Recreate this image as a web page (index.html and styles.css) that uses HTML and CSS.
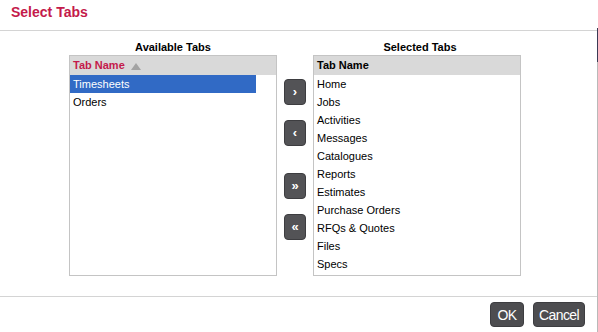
FILE: index.html
```html
<!DOCTYPE html>
<html lang="en">
<head>
    <meta charset="UTF-8">
    <title>Select Tabs</title>
    <link rel="stylesheet" href="styles.css">
</head>
<body>
    <div class="page">
        <div class="dialog">
            <div class="dialog-title">Select Tabs</div>

            <div class="dialog-body">
                <div class="tab-column">
                    <div class="column-label">Available Tabs</div>
                    <div class="list-box">
                        <div class="list-head sorted">
                            Tab Name
                            <svg class="sort-icon" width="10" height="7" viewBox="0 0 10 7"><polygon points="5,0 10,7 0,7" fill="#a3a3a3"/></svg>
                        </div>
                        <div class="list-rows narrow">
                            <div class="list-row selected">Timesheets</div>
                            <div class="list-row">Orders</div>
                        </div>
                    </div>
                </div>

                <div class="move-buttons">
                    <button class="move-btn">&rsaquo;</button>
                    <button class="move-btn">&lsaquo;</button>
                    <button class="move-btn spaced">&raquo;</button>
                    <button class="move-btn">&laquo;</button>
                </div>

                <div class="tab-column">
                    <div class="column-label">Selected Tabs</div>
                    <div class="list-box">
                        <div class="list-head">Tab Name</div>
                        <div class="list-rows">
                            <div class="list-row">Home</div>
                            <div class="list-row">Jobs</div>
                            <div class="list-row">Activities</div>
                            <div class="list-row">Messages</div>
                            <div class="list-row">Catalogues</div>
                            <div class="list-row">Reports</div>
                            <div class="list-row">Estimates</div>
                            <div class="list-row">Purchase Orders</div>
                            <div class="list-row">RFQs &amp; Quotes</div>
                            <div class="list-row">Files</div>
                            <div class="list-row">Specs</div>
                        </div>
                    </div>
                </div>
            </div>

            <div class="dialog-footer">
                <button class="footer-btn">OK</button>
                <button class="footer-btn">Cancel</button>
            </div>
        </div>
        <div class="page-edge"></div>
    </div>
</body>
</html>
```

FILE: styles.css
```css
body {
    margin: 0;
    font-family: "Liberation Sans", Arial, sans-serif;
    font-size: 11px;
    color: #000;
    background: #fff;
}
.page {
    display: flex;
    height: 332px;
}
.dialog {
    flex: 1;
    display: flex;
    flex-direction: column;
}
.page-edge {
    width: 1px;
    margin-top: 28px;
    background: linear-gradient(#3b3b55 0, #3b3b55 34px, #b9b9b9 34px);
}
.dialog-title {
    height: 31px;
    box-sizing: border-box;
    padding: 4px 0 0 11px;
    font-size: 14px;
    font-weight: bold;
    color: #c41a4b;
    border-bottom: 1px solid #d4d4d4;
}
.dialog-body {
    flex: 1;
    display: flex;
    padding: 9px 0 0 69px;
}
.tab-column {
    width: 208px;
}
.column-label {
    height: 15px;
    line-height: 15px;
    text-align: center;
    font-weight: bold;
}
.tab-column + .move-buttons + .tab-column .column-label {
    padding-left: 6px;
}
.list-box {
    height: 221px;
    box-sizing: border-box;
    border: 1px solid #c4c4c4;
}
.list-head {
    height: 19px;
    line-height: 19px;
    padding-left: 3px;
    background: #d9d9d9;
    font-weight: bold;
}
.list-head.sorted {
    color: #c41a4b;
}
.sort-icon {
    margin-left: 3px;
    vertical-align: -1px;
}
.list-rows.narrow {
    width: 186px;
}
.list-row {
    height: 18px;
    line-height: 18px;
    padding-left: 3px;
}
.list-row.selected {
    background: #316ac5;
    color: #fff;
}
.move-buttons {
    width: 36px;
    display: flex;
    flex-direction: column;
    align-items: center;
    gap: 15px;
    padding-top: 39px;
    box-sizing: border-box;
}
.move-btn {
    width: 22px;
    height: 26px;
    padding: 0;
    border: 1px solid #3d3d40;
    border-radius: 4px;
    background: #535356;
    color: #fff;
    font-family: "Liberation Sans", Arial, sans-serif;
    font-size: 13px;
    font-weight: bold;
    line-height: 22px;
}
.move-btn.spaced {
    margin-top: 12px;
}
.dialog-footer {
    height: 36px;
    box-sizing: border-box;
    border-top: 1px solid #d4d4d4;
    display: flex;
    justify-content: flex-end;
    gap: 9px;
    padding: 5px 12px 0 0;
}
.footer-btn {
    height: 25px;
    padding: 0 5px;
    min-width: 34px;
    border: 1px solid #3d3d40;
    border-radius: 4px;
    background: #4d4d50;
    color: #fff;
    font-family: "Liberation Sans", Arial, sans-serif;
    font-size: 14px;
    letter-spacing: -0.6px;
}
```
